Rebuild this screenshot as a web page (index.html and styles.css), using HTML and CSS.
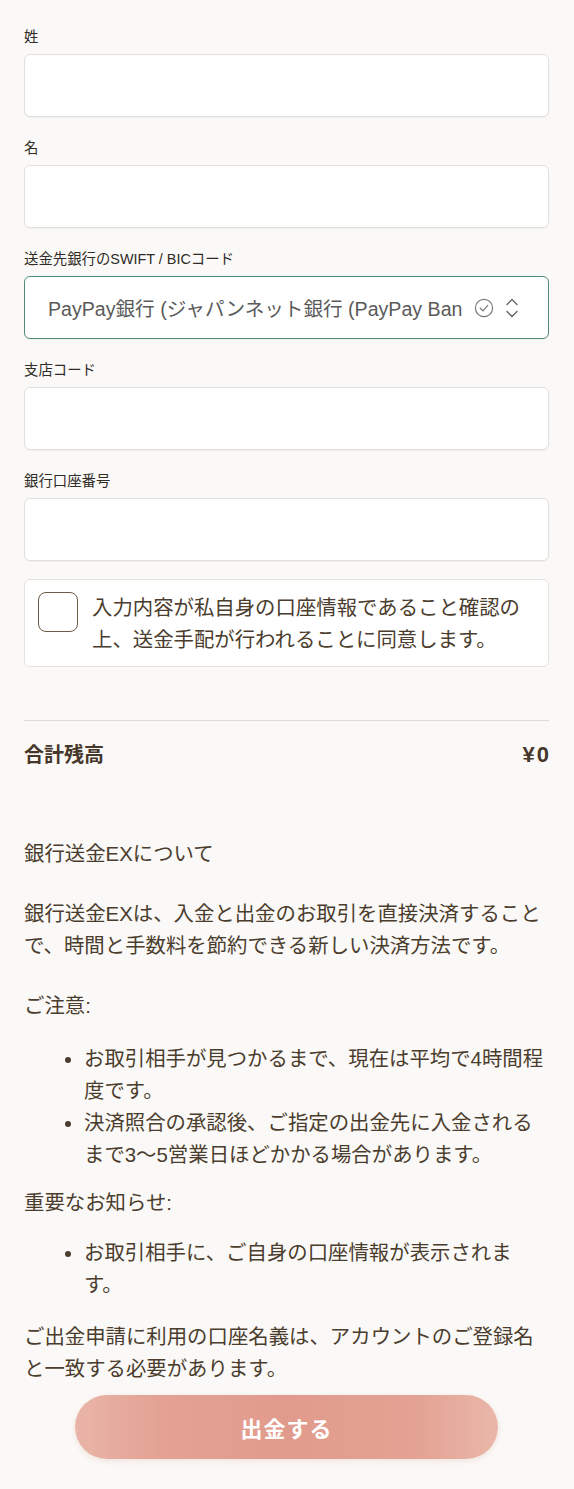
FILE: index.html
```html
<!DOCTYPE html>
<html lang="ja">
<head>
    <meta charset="UTF-8">
    <meta name="viewport" content="width=device-width, initial-scale=1.0">
    <title>出金</title>
    <link rel="stylesheet" href="styles.css">
</head>
<body>
    <div class="page">
        <!-- Bank account form -->
        <div class="fields">
            <div class="field">
                <label class="field-label">姓</label>
                <div class="input"></div>
            </div>
            <div class="field">
                <label class="field-label">名</label>
                <div class="input"></div>
            </div>
            <div class="field">
                <label class="field-label">送金先銀行のSWIFT / BICコード</label>
                <div class="input select">
                    <span class="select-text">PayPay銀行 (ジャパンネット銀行 (PayPay Ban</span>
                    <svg class="select-check" width="20" height="20" viewBox="0 0 20 20">
                        <circle cx="10" cy="10" r="8.6" fill="none" stroke="#7a7a7a" stroke-width="1.2"/>
                        <polyline points="6.2,10.2 9,12.8 13.8,7.4" fill="none" stroke="#7a7a7a" stroke-width="1.2" stroke-linecap="round" stroke-linejoin="round"/>
                    </svg>
                    <svg class="select-arrows" width="14" height="22" viewBox="0 0 14 22">
                        <polyline points="2,7.5 7,2.5 12,7.5" fill="none" stroke="#666" stroke-width="1.4" stroke-linecap="round" stroke-linejoin="round"/>
                        <polyline points="2,14.5 7,19.5 12,14.5" fill="none" stroke="#666" stroke-width="1.4" stroke-linecap="round" stroke-linejoin="round"/>
                    </svg>
                </div>
            </div>
            <div class="field">
                <label class="field-label">支店コード</label>
                <div class="input"></div>
            </div>
            <div class="field">
                <label class="field-label">銀行口座番号</label>
                <div class="input"></div>
            </div>
        </div>

        <div class="agree">
            <span class="checkbox"></span>
            <span class="agree-text">入力内容が私自身の口座情報であること確認の上、送金手配が行われることに同意します。</span>
        </div>

        <div class="total">
            <span>合計残高</span>
            <span class="amount">¥0</span>
        </div>

        <!-- About section -->
        <div class="about">
            <p class="about-title">銀行送金EXについて</p>
            <p class="about-desc">銀行送金EXは、入金と出金のお取引を直接決済することで、時間と手数料を節約できる新しい決済方法です。</p>
            <p class="about-head">ご注意:</p>
            <ul class="about-list">
                <li>お取引相手が見つかるまで、現在は平均で4時間程度です。</li>
                <li>決済照合の承認後、ご指定の出金先に入金されるまで3〜5営業日ほどかかる場合があります。</li>
            </ul>
            <p class="about-head notice">重要なお知らせ:</p>
            <ul class="about-list notice-list">
                <li>お取引相手に、ご自身の口座情報が表示されます。</li>
            </ul>
            <p class="about-last">ご出金申請に利用の口座名義は、アカウントのご登録名と一致する必要があります。</p>
        </div>

        <button class="btn">出金する</button>
    </div>
</body>
</html>
```

FILE: styles.css
```css
body {
    margin: 0;
    background-color: #fbf9f7;
    font-family: "Liberation Sans", "Noto Sans CJK JP", sans-serif;
    color: #4b3d2e;
}
.page {
    padding: 28px 25px 29px 24px;
}
.fields {
    display: flex;
    flex-direction: column;
    gap: 22px;
}
.field-label {
    display: block;
    font-size: 14.4px;
    line-height: 18px;
    color: #2f2b27;
    margin-bottom: 8px;
}
.input {
    box-sizing: border-box;
    height: 63px;
    background-color: #fff;
    border: 1px solid #e2e0dc;
    border-radius: 6px;
    box-shadow: 0 1px 1px rgba(0, 0, 0, 0.04);
}
.select {
    display: flex;
    align-items: center;
    padding: 0 26px 0 23px;
    border: 1.5px solid #4f8c76;
}
.select-text {
    white-space: nowrap;
    font-size: 19.6px;
    color: #5a5a5a;
}
.select-check {
    margin-left: 12px;
}
.select-arrows {
    margin-left: 11px;
}
.agree {
    display: flex;
    gap: 14px;
    margin-top: 18px;
    padding: 12px 13px 10px 13px;
    background-color: #fff;
    border: 1px solid #e6e3df;
    border-radius: 6px;
}
.checkbox {
    flex: none;
    box-sizing: border-box;
    width: 40px;
    height: 40px;
    border: 1.5px solid #6c5a46;
    border-radius: 8px;
}
.agree-text {
    font-size: 20.4px;
    line-height: 32px;
}
.total {
    display: flex;
    justify-content: space-between;
    margin-top: 53px;
    padding-top: 21px;
    border-top: 1px solid #dddad6;
    font-size: 20px;
    line-height: 26px;
    font-weight: bold;
    color: #46372a;
}
.amount {
    font-size: 22px;
    letter-spacing: 2px;
    margin-right: -2px;
}
.about {
    font-size: 20.4px;
    line-height: 32px;
}
.about p {
    margin: 0;
}
.about .about-title {
    margin-top: 70px;
}
.about .about-desc,
.about .about-head {
    margin-top: 28px;
}
.about .notice {
    margin-top: 16px;
}
.about-list {
    margin: 21px 0 0;
    padding-left: 60px;
}
.notice-list {
    margin-top: 18px;
}
.about .about-last {
    margin-top: 20px;
}
.btn {
    display: block;
    width: 423px;
    height: 64px;
    margin: 10px auto 0;
    border: none;
    border-radius: 32px;
    background: linear-gradient(90deg, #e9b5a8 0%, #e3a294 20%, #e19b8c 50%, #e3a293 80%, #e9b7a9 100%);
    box-shadow: 0 2px 6px rgba(200, 140, 120, 0.2);
    color: #fff;
    font-family: "Liberation Sans", "Noto Sans CJK JP", sans-serif;
    font-size: 22px;
    font-weight: bold;
    letter-spacing: 1px;
    cursor: pointer;
}
```
